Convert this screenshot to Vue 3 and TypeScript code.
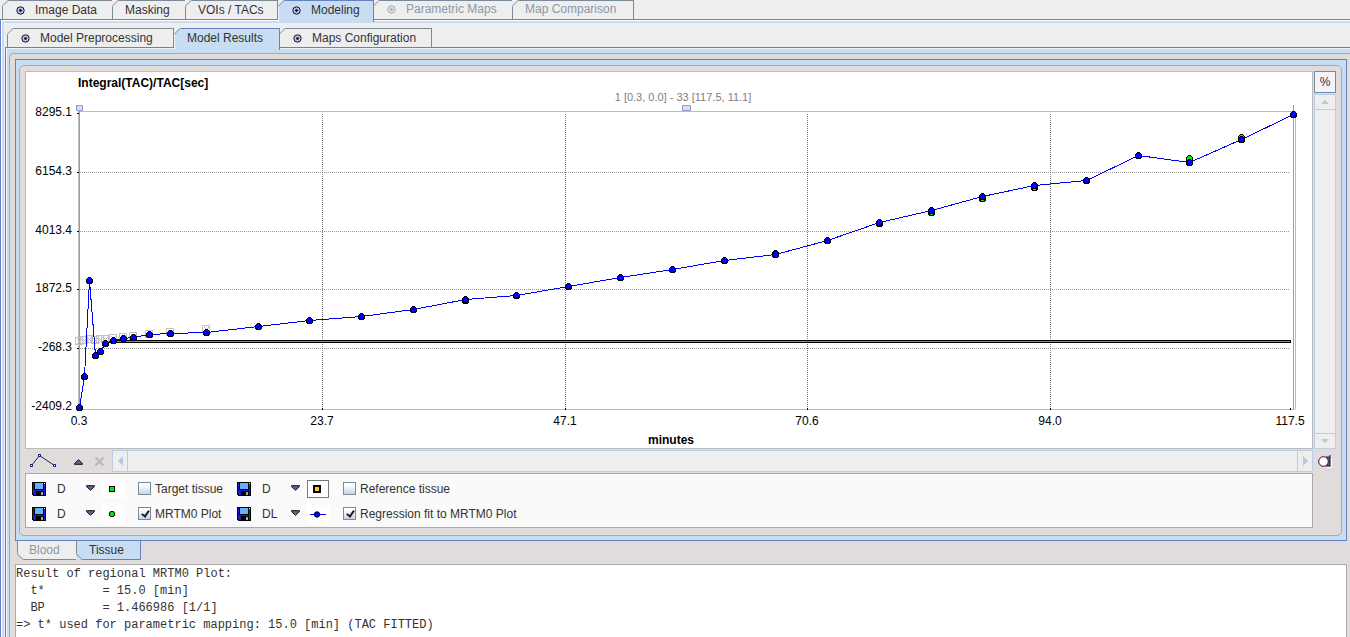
<script setup lang="ts">
import { computed, ref } from 'vue'

interface Tab {
  label: string
  icon?: boolean
  disabled?: boolean
}

interface Series {
  id: string
  label: string
  mode: string
  marker: 'square' | 'ref' | 'circle' | 'line'
  shown: boolean
}

const mainTabs: Tab[] = [
  { label: 'Image Data', icon: true },
  { label: 'Masking' },
  { label: 'VOIs / TACs' },
  { label: 'Modeling', icon: true },
  { label: 'Parametric Maps', icon: true, disabled: true },
  { label: 'Map Comparison', disabled: true },
]
const modelTabs: Tab[] = [
  { label: 'Model Preprocessing', icon: true },
  { label: 'Model Results' },
  { label: 'Maps Configuration', icon: true },
]
const activeMain = ref('Modeling')
const activeModel = ref('Model Results')

const series = ref<Series[]>([
  { id: 'target', label: 'Target tissue', mode: 'D', marker: 'square', shown: false },
  { id: 'reference', label: 'Reference tissue', mode: 'D', marker: 'ref', shown: false },
  { id: 'mrtm', label: 'MRTM0 Plot', mode: 'D', marker: 'circle', shown: true },
  { id: 'fit', label: 'Regression fit to MRTM0 Plot', mode: 'DL', marker: 'line', shown: true },
])

// Plot coordinates, relative to the top left of the axes
const fit: [number, number][] = [
  [0, 296], [5, 265], [10, 169], [16, 244], [21, 240], [26, 232], [34, 229], [44, 227], [54, 226],
  [70, 223], [91, 222], [127, 221], [179, 215], [230, 209], [282, 205], [334, 198], [386, 188],
  [437, 184], [489, 175], [541, 166], [593, 158], [645, 149], [696, 143], [748, 129], [800, 111],
  [852, 99], [903, 85], [955, 74], [1007, 69], [1059, 44], [1110, 51], [1162, 28], [1214, 3],
]
const measured: [number, number][] = [
  [386, 189], [696, 142], [800, 112], [852, 101], [903, 87], [955, 76], [1059, 44], [1110, 47], [1162, 26],
]
const excluded: [number, number][] = [
  [0, 230], [5, 229], [10, 228], [16, 229], [21, 228], [26, 228], [34, 227], [44, 226], [54, 225],
  [70, 223], [91, 221], [127, 218],
]
const fitLine = computed(() => fit.map((p) => p.join(',')).join(' '))

const yTicks = [
  { y: 2, label: '8295.1' },
  { y: 61, label: '6154.3' },
  { y: 120, label: '4013.4' },
  { y: 178, label: '1872.5' },
  { y: 237, label: '-268.3' },
  { y: 296, label: '-2409.2' },
]
const xTicks = [
  { x: 0, label: '0.3' },
  { x: 243, label: '23.7' },
  { x: 486, label: '47.1' },
  { x: 728, label: '70.6' },
  { x: 971, label: '94.0' },
  { x: 1211, label: '117.5' },
]

const report = `Result of regional MRTM0 Plot:
  t*        = 15.0 [min]
  BP        = 1.466986 [1/1]
=> t* used for parametric mapping: 15.0 [min] (TAC FITTED)`
</script>

<template>
  <div class="app">
    <nav class="tabs main-tabs" role="tablist">
      <button
        v-for="t in mainTabs"
        :key="t.label"
        class="tab"
        :class="{ active: t.label === activeMain, 'with-icon': t.icon }"
        role="tab"
        :disabled="t.disabled"
        @click="activeMain = t.label"
      >
        <svg class="corner" width="7" height="7"><path class="cut" d="M0 0H7L0 7Z" /><path class="edge" d="M0 6.5L6.5 0" /></svg>
        <svg v-if="t.icon" class="dot" width="9" height="9">
          <circle class="ring" cx="4.500" cy="4.500" r="3.700" /><circle class="core" cx="4.500" cy="4.500" r="1.300" />
        </svg>
        {{ t.label }}
      </button>
    </nav>

    <main class="outer">
      <nav class="tabs model-tabs" role="tablist">
        <button
          v-for="t in modelTabs"
          :key="t.label"
          class="tab"
          :class="{ active: t.label === activeModel, 'with-icon': t.icon }"
          role="tab"
          @click="activeModel = t.label"
        >
          <svg class="corner" width="7" height="7"><path class="cut" d="M0 0H7L0 7Z" /><path class="edge" d="M0 6.5L6.5 0" /></svg>
          <svg v-if="t.icon" class="dot" width="9" height="9">
            <circle class="ring" cx="4.500" cy="4.500" r="3.700" /><circle class="core" cx="4.500" cy="4.500" r="1.300" />
          </svg>
          {{ t.label }}
        </button>
      </nav>

      <div class="inner">
        <div class="frame">
          <section class="panel">
            <div class="card">
              <div class="chart">
                <svg viewBox="0 0 1286 376" shape-rendering="crispEdges">
                  <text class="title" x="52" y="15">Integral(TAC)/TAC[sec]</text>
                  <text class="range" x="657" y="29" text-anchor="middle">1 [0.3, 0.0] - 33 [117.5, 11.1]</text>
                  <text class="title" x="645" y="372" text-anchor="middle">minutes</text>
                  <text v-for="t in yTicks" :key="t.label" x="46" :y="t.y + 42" text-anchor="end">{{ t.label }}</text>
                  <text v-for="t in xTicks" :key="t.label" :x="t.x + 53" y="353" text-anchor="middle">{{ t.label }}</text>

                  <g transform="translate(53 39)">
                    <path class="axis" d="M-1 .5H1216M-.5 0V298M-1 298.500H1216M1216.500 0V298" />
                    <path v-for="t in yTicks" :key="t.y" class="tick" :d="`M-2 ${t.y + 0.5}h2`" />
                    <path v-for="t in xTicks" :key="t.x" class="tick" :d="`M${t.x + 0.5} 297v2`" />
                    <path v-for="t in yTicks.slice(1, 5)" :key="t.label" class="grid" :d="`M1 ${t.y + 0.5}H1211`" />
                    <path v-for="t in xTicks.slice(1, 5)" :key="t.label" class="grid dark" :d="`M${t.x + 0.5} 3V297`" />
                    <path class="guide" d="M.5 0V298M1214.500 -6V298" />
                    <rect class="handle" x="-2.500" y="-5.500" width="6" height="5" />
                    <rect class="handle" x="603.500" y="-5.500" width="8" height="5" />

                    <g v-for="(p, i) in excluded" :key="i" class="excluded" :transform="`translate(${p[0]} ${p[1]})`">
                      <rect x="-3.500" y="-3.500" width="7" height="7" />
                      <path d="M-2 -2L3 3M3 -2L-2 3" />
                    </g>
                    <rect class="band" x="34.500" y="229.500" width="1177" height="2" />
                    <polyline class="fit" :points="fitLine" transform="translate(.5 .5)" />
                    <g class="points" transform="translate(.5 .5)">
                      <circle v-for="(p, i) in measured" :key="i" class="measured" :cx="p[0]" :cy="p[1]" r="3" />
                      <circle v-for="(p, i) in fit" :key="i" class="fitted" :cx="p[0]" :cy="p[1]" r="3" />
                    </g>
                  </g>
                </svg>
              </div>

              <div class="side">
                <button class="percent">%</button>
                <div class="scroll vertical">
                  <button aria-label="Scroll up"><svg width="8" height="4"><path d="M0 4L4 0L8 4Z" /></svg></button>
                  <button aria-label="Scroll down"><svg width="8" height="4"><path d="M0 0L4 4L8 0Z" /></svg></button>
                </div>
              </div>

              <div class="bar">
                <button class="tool line-tool" aria-label="Curve style">
                  <svg width="28" height="14">
                    <path class="curve" d="M2.500 11.500L10.500 1.500L25.500 11.500" />
                    <path class="nodes" d="M1.500 10.500h2v2h-2zM9.500 .5h2v2h-2zM24.500 10.500h2v2h-2z" />
                  </svg>
                </button>
                <button class="tool up-tool" aria-label="Raise">
                  <svg width="9" height="6"><path class="arrow" d="M.5 4.500L4.500 .7L8.500 4.500V5.300H.5Z" /></svg>
                </button>
                <button class="tool del-tool" aria-label="Remove" disabled>
                  <svg width="9" height="9"><path class="cross" d="M.5 .5L8.500 8.500M8.500 .5L.5 8.500" /></svg>
                </button>
                <div class="scroll horizontal">
                  <button aria-label="Scroll left"><svg width="5" height="10"><path d="M5 0L0 5L5 10Z" /></svg></button>
                  <button aria-label="Scroll right"><svg width="5" height="10"><path d="M0 0L5 5L0 10Z" /></svg></button>
                </div>
              </div>
              <button class="camera" aria-label="Capture">
                <svg width="14" height="13">
                  <path class="lens-glow" d="M13.500 3V12.500H9" />
                  <rect class="lens-body" x="8.500" y="2" width="3.500" height="9" />
                  <path class="lens-edge" d="M12 0V11.500M8 2H12M8 11H12" />
                  <circle class="lens" cx="5.500" cy="6.500" r="4.800" />
                </svg>
              </button>

              <div class="legend">
                <div v-for="s in series" :key="s.id" class="item">
                  <button class="save" :aria-label="`Save ${s.label}`">
                    <svg width="14" height="14" shape-rendering="crispEdges">
                      <path fill="#000" d="M0 0H14V14H1L0 13Z" />
                      <path fill="#1c1cd0" d="M1 1H13V13H2L1 12Z" />
                      <path fill="#000" d="M2 0H12V8H2Z" />
                      <path fill="#63b4ff" d="M3 1H11V7H3Z" />
                      <path fill="#fff" d="M12 1H13V2H12Z" />
                      <path fill="#000" d="M4 9H12V14H4Z" />
                      <path fill="#aaa8a8" d="M9 10H11V13H9Z" />
                    </svg>
                  </button>
                  <span class="mode">
                    <select v-model="s.mode" :aria-label="`${s.label} style`">
                      <option>D</option>
                      <option>DL</option>
                    </select>
                    <svg width="9" height="6"><path class="arrow" d="M.5 .7H8.500V1.500L4.500 5.300L.5 1.500Z" /></svg>
                  </span>
                  <button class="marker" :class="{ framed: s.marker === 'ref' }" :aria-label="`${s.label} marker`">
                    <svg width="16" height="8">
                      <rect v-if="s.marker === 'square'" class="m-green" x="4.500" y="1.500" width="5" height="5" />
                      <circle v-if="s.marker === 'circle'" class="m-green" cx="7" cy="4" r="2.700" />
                      <rect v-if="s.marker === 'ref'" class="m-ref" x="4" y="1" width="6" height="6" />
                      <path v-if="s.marker === 'line'" class="m-line" d="M0 4.500H16" />
                      <circle v-if="s.marker === 'line'" class="m-blue" cx="7" cy="4.500" r="2.700" />
                    </svg>
                  </button>
                  <label><input v-model="s.shown" type="checkbox" />{{ s.label }}</label>
                </div>
              </div>
            </div>
          </section>

          <nav class="result-tabs" role="tablist">
            <button class="btab" role="tab" disabled>
              <svg class="corner" width="7" height="7"><path class="cut" d="M0 0V7H7Z" /><path class="edge" d="M0 .5L6.500 7" /></svg>
              Blood
            </button>
            <button class="btab active" role="tab">
              <svg class="corner" width="7" height="7"><path class="cut" d="M0 0V7H7Z" /><path class="edge" d="M0 .5L6.500 7" /></svg>
              Tissue
            </button>
          </nav>
          <pre class="report">{{ report }}</pre>
        </div>
      </div>
    </main>
  </div>
</template>

<style>
body {
  margin: 0;
  background: #eee;
}
</style>

<style scoped>
.app {
  --blue: #6382bf;
  --light: #c8ddf2;
  --grey: #7a8a99;
  --panel: #e0dcdb;
  display: flex;
  flex-direction: column;
  min-height: 100vh;
  background: #eee;
  color: #333;
  font: 12px/14px 'Liberation Sans', Arial, sans-serif;
}
.app *,
.app {
  box-sizing: border-box;
}
button,
select,
input {
  margin: 0;
  padding: 0;
  border: 0;
  border-radius: 0;
  background: none;
  color: inherit;
  font: inherit;
}
svg {
  display: block;
  flex: none;
}

.tabs {
  display: grid;
  justify-content: start;
  height: 19px;
}
.main-tabs {
  grid-template-columns: 111px 73px 92px 96px 139px 121px;
  padding-left: 2px;
}
.model-tabs {
  grid-template-columns: 167px 106px 152px;
  margin-top: 5px;
  padding-left: 4px;
}
.tab {
  position: relative;
  display: flex;
  align-items: center;
  height: 19px;
  padding: 0 0 0 12px;
  border-top: 1px solid var(--grey);
  border-right: 1px solid var(--grey);
  background: #eee;
  white-space: nowrap;
}
.tab.with-icon {
  padding-left: 13px;
}
.tab:first-child {
  border-left: 1px solid var(--grey);
}
.tab.active {
  z-index: 1;
  height: 22px;
  padding-bottom: 3px;
  border-color: var(--blue);
  border-left: 1px solid #eef4fa;
  background: var(--light);
}
.tab:disabled {
  padding-bottom: 2px;
  color: #8a99a8;
}
.tab:disabled .dot {
  opacity: 0.3;
}
.corner {
  position: absolute;
  top: -1px;
  left: -1px;
}
.cut {
  fill: #eee;
}
.edge {
  fill: none;
  stroke: var(--grey);
}
.active .edge {
  stroke: var(--blue);
}
.dot {
  margin-right: 10px;
}
.ring {
  fill: #b8b8f0;
  stroke: #15151f;
}
.core {
  fill: #000;
}

.outer {
  display: flex;
  flex: 1;
  flex-direction: column;
  padding: 3px 0 0 2px;
  border-top: 1px solid var(--blue);
  border-left: 1px solid var(--blue);
  box-shadow: inset 1px 1px #fff, inset 3px 3px var(--light);
}
.inner {
  display: flex;
  flex: 1;
  flex-direction: column;
  margin-left: 2px;
  padding: 5px 0 0 3px;
  border-top: 1px solid var(--blue);
  border-left: 1px solid var(--blue);
  background: var(--light);
  box-shadow: inset 1px 1px #eef4fa;
}
.frame {
  display: flex;
  flex: 1;
  flex-direction: column;
  padding: 5px 3px 0 5px;
  border: solid #aaa;
  border-width: 1px 0 0 1px;
  border-radius: 5px 0 0 0;
  background: var(--panel);
}
.panel {
  padding: 5px 4px 4px 3px;
  border: 1px solid var(--blue);
  background: var(--light);
}
.card {
  display: grid;
  grid-template-columns: minmax(0, 1fr) 22px;
  gap: 1px;
  padding: 5px 5px 7px;
  border: 1px solid #aaa;
  border-radius: 5px;
  background: var(--panel);
}

.chart {
  border: 1px solid #bbb;
  background: #fff;
}
.chart svg {
  width: 100%;
  height: auto;
}
.chart text {
  fill: #000;
}
.chart .title {
  font-weight: bold;
}
.chart .range {
  fill: #808080;
  font-size: 11px;
}
.axis {
  stroke: #bbb;
}
.tick {
  stroke: #000;
}
.grid {
  stroke: #999;
  stroke-dasharray: 1 1;
}
.grid.dark {
  stroke: #777;
}
.guide {
  stroke: #9c96cc;
}
.handle {
  fill: #ddd;
  stroke: #8fa0dc;
}
.excluded {
  fill: none;
  stroke: #c0c0c0;
}
.band {
  fill: #888;
  stroke: #000;
}
.fit {
  fill: none;
  stroke: #00f;
}
.measured,
.fitted {
  fill: #00f;
  stroke: #000;
}
.measured {
  fill: #0e0;
}

.side {
  display: flex;
  flex-direction: column;
  gap: 1px;
}
.percent {
  height: 22px;
  border: 1px solid var(--grey);
  background: #f5f3fa;
}
.scroll {
  display: flex;
  flex: 1;
  justify-content: space-between;
  border: 1px solid #b8cfe5;
  background: #eee;
}
.scroll button,
.camera {
  display: flex;
  align-items: center;
  justify-content: center;
}
.scroll path {
  fill: #b0cae6;
}
.vertical {
  flex-direction: column;
}
.vertical button {
  height: 15px;
}
.vertical button:first-child {
  border-bottom: 1px solid #b8cfe5;
}
.vertical button:last-child {
  border-top: 1px solid #b8cfe5;
}
.horizontal button {
  width: 15px;
}
.horizontal button:first-child {
  border-right: 1px solid #b8cfe5;
}
.horizontal button:last-child {
  border-left: 1px solid #b8cfe5;
}

.bar {
  display: flex;
  height: 22px;
}
.tool {
  display: flex;
  align-items: center;
  justify-content: center;
}
.line-tool {
  width: 36px;
}
.up-tool {
  width: 34px;
  padding-top: 2px;
}
.del-tool {
  justify-content: flex-start;
  width: 17px;
}
.curve {
  fill: none;
  stroke: #1a2470;
}
.nodes {
  fill: #fff;
  stroke: #0a1464;
}
.arrow {
  fill: #63638f;
  stroke: #111;
}
.cross {
  fill: none;
  stroke: #b8b8b8;
  stroke-width: 2;
}
.lens {
  fill: #fff;
  stroke: #2c0a3c;
}
.lens-body {
  fill: #3c7080;
}
.lens-edge {
  fill: none;
  stroke: #2c0a3c;
}
.lens-glow {
  fill: none;
  stroke: #fff;
}

.legend {
  display: grid;
  grid-template-columns: 205px 1fr;
  grid-auto-rows: 25px;
  padding: 2px 0 1px 6px;
  border: 1px solid #aaa;
  background: #fafafa;
}
.item {
  display: flex;
  align-items: center;
  white-space: nowrap;
}
.mode {
  position: relative;
  width: 38px;
  margin-left: 11px;
}
.mode select {
  display: block;
  width: 38px;
  appearance: none;
}
.mode svg {
  position: absolute;
  top: 3px;
  right: 0;
  pointer-events: none;
}
.marker {
  display: flex;
  align-items: center;
  justify-content: center;
  width: 22px;
  height: 18px;
  margin: 0 14px 0 7px;
  background: #fff;
}
.marker.framed {
  border: 1px solid #777;
}
.m-green {
  fill: #0e0;
  stroke: #000;
}
.m-ref {
  fill: #fc3;
  stroke: #000;
  stroke-width: 2;
}
.m-line {
  stroke: #00f;
}
.m-blue {
  fill: #00f;
  stroke: #000;
}
.item label {
  display: flex;
  align-items: center;
  gap: 4px;
}
.item input {
  width: 13px;
  height: 13px;
  border: 1px solid var(--grey);
  appearance: none;
  background: linear-gradient(#fff 20%, #c4d4e8);
}
.item input:checked::after {
  display: block;
  width: 3px;
  height: 6px;
  margin: 1px 0 0 4px;
  border: solid #222;
  border-width: 0 2px 2px 0;
  content: '';
  transform: rotate(35deg);
}

.result-tabs {
  display: grid;
  grid-template-columns: 60px 64px;
  height: 23px;
  padding-left: 2px;
}
.btab {
  position: relative;
  height: 19px;
  padding: 0 0 0 11px;
  border: solid var(--grey);
  border-width: 0 1px 1px;
  background: #eee;
  text-align: left;
}
.btab.active {
  padding-left: 12px;
  border-color: var(--blue);
  border-left: 0;
  background: var(--light);
}
.btab:disabled {
  color: #8a99a8;
}
.btab .corner {
  top: auto;
  bottom: -1px;
}
.btab .cut {
  fill: var(--panel);
}
.report {
  flex: 1;
  margin: 0;
  padding-top: 1px;
  border: 1px solid #aaa;
  border-bottom: 0;
  background: #fff;
  font: 12px/17px 'Liberation Mono', 'Courier New', monospace;
}
</style>
